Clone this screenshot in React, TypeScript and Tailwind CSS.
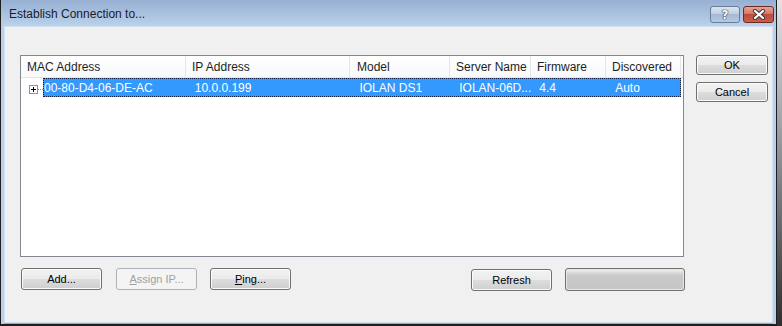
const btn =
  "flex items-center justify-center rounded-[3px] border border-[#707070] bg-[linear-gradient(to_bottom,#f2f2f2_0%,#ebebeb_50%,#dddddd_50%,#cfcfcf_100%)] shadow-[inset_0_0_0_1px_#fbfbfb] text-[11px] text-black";

const disabledBtn =
  "flex items-center justify-center rounded-[3px] border border-[#adb2b5] bg-[#f4f4f4] text-[11px] text-[#a0a0a0]";

const columns = [
  { label: "MAC Address", width: "w-[165px]", pad: "pl-[6px]" },
  { label: "IP Address", width: "w-[164px]", pad: "pl-[6px]" },
  { label: "Model", width: "w-[100px]", pad: "pl-[7px]" },
  { label: "Server Name", width: "w-[81px]", pad: "pl-[6px]" },
  { label: "Firmware", width: "w-[75px]", pad: "pl-[6px]" },
  { label: "Discovered", width: "w-[75px]", pad: "pl-[6px]" },
];

function TitleBar() {
  return (
    <div className="flex h-[26px] bg-[linear-gradient(to_bottom,#97b0d2,#b9d1ea)] pl-[8px] pr-[2px]">
      <div className="flex-1 pt-[7px] text-[12px] leading-[14px] text-[#1b1b2b]">
        Establish Connection to...
      </div>
      <div className="mt-[6px] flex h-[17px] gap-[3px]">
        <div className="flex w-[30px] items-center justify-center rounded-[3px] border border-[#6a7c97] bg-[linear-gradient(to_bottom,#dbe5f1_0%,#bccde2_50%,#a3b9d6_50%,#b4cbe5_100%)]">
          <span className="font-['DejaVu_Sans',sans-serif] text-[12px] font-bold leading-none text-white [text-shadow:0_0_1px_#2a2a2a,0_0_1px_#2a2a2a,0_0_1px_#2a2a2a]">
            ?
          </span>
        </div>
        <div className="flex w-[31px] items-center justify-center rounded-[3px] border border-[#6b2c28] bg-[linear-gradient(to_bottom,#e6a496_0%,#d47868_45%,#c04a38_50%,#c9604c_100%)]">
          <svg width="16" height="11" viewBox="0 0 16 11">
            <path d="M4 2 L12 9 M12 2 L4 9" stroke="#3b3b3b" strokeWidth="4.2" strokeLinecap="round" />
            <path d="M4 2 L12 9 M12 2 L4 9" stroke="#ffffff" strokeWidth="2.2" strokeLinecap="round" />
          </svg>
        </div>
      </div>
    </div>
  );
}

function DeviceList() {
  return (
    <div className="h-[202px] w-[664px] border border-[#828790] bg-white text-[12px]">
      <div className="flex h-[22px] border-b border-[#e5e5e5] bg-[linear-gradient(to_bottom,#ffffff,#f7f8fa)]">
        {columns.map((col) => (
          <div
            key={col.label}
            className={`${col.width} ${col.pad} flex items-center border-r border-[#e5e5e5] pt-[1px] text-[#1e1e1e]`}
          >
            {col.label}
          </div>
        ))}
      </div>
      <div className="flex h-[19px]">
        <div className="flex w-[22px] items-start">
          <div className="ml-[8px] mt-[7px] flex h-[9px] w-[9px] items-center justify-center border border-[#919191] bg-white">
            <svg width="7" height="7" viewBox="0 0 7 7">
              <path d="M1 3.5 H6 M3.5 1 V6" stroke="#000" strokeWidth="1" />
            </svg>
          </div>
          <div className="mt-[11px] w-[5px] border-t border-dotted border-[#8a8a8a]" />
        </div>
        <div className="flex w-[638px] items-center border border-dotted border-[#10204a] bg-[#3399ff] text-white">
          <div className="w-[142px]">00-80-D4-06-DE-AC</div>
          <div className="w-[164px] pl-[9px]">10.0.0.199</div>
          <div className="w-[100px] pl-[10px]">IOLAN DS1</div>
          <div className="w-[81px] pl-[10px] whitespace-nowrap">IOLAN-06D...</div>
          <div className="w-[75px] pl-[9px]">4.4</div>
          <div className="w-[75px] pl-[10px]">Auto</div>
        </div>
      </div>
    </div>
  );
}

export default function App() {
  return (
    <div className="flex h-[326px] w-[782px] bg-[linear-gradient(to_bottom,#dfe3e8,#9aa0a8_40%,#2e2e2e)] font-['Liberation_Sans',Arial,sans-serif]">
      <div className="h-[326px] w-[777px] bg-[#1e1e1e] pl-[1px] pr-[1px] pb-[2px]">
        <div className="flex h-full flex-col bg-[#b9d1ea]">
          <TitleBar />
          <div className="mx-[3px] flex-1 border border-[#d2e2f3] bg-[#f0f0f0] pl-[15px] pt-[28px]">
            <div className="flex">
              <DeviceList />
              <div className="ml-[12px] flex flex-col">
                <button className={`${btn} h-[20px] w-[72px] border-[#3c8fc4] shadow-[inset_0_0_0_1px_#8fdcf8]`}>
                  OK
                </button>
                <button className={`${btn} mt-[7px] h-[20px] w-[72px]`}>Cancel</button>
              </div>
            </div>
            <div className="mt-[11px] flex items-start">
              <button className={`${btn} ml-[1px] h-[22px] w-[81px]`}>Add...</button>
              <button className={`${disabledBtn} ml-[14px] h-[22px] w-[81px]`}>
                <span>
                  <span className="underline">A</span>ssign IP...
                </span>
              </button>
              <button className={`${btn} ml-[13px] h-[22px] w-[81px]`}>
                <span>
                  <span className="underline">P</span>ing...
                </span>
              </button>
              <button className={`${btn} ml-[180px] mt-[1px] h-[22px] w-[81px]`}>Refresh</button>
              <div className="ml-[13px] h-[23px] w-[120px] rounded-[3px] border border-[#707070] bg-[linear-gradient(to_bottom,#f4f4f4_0%,#dadada_18%,#c9c9c9_30%,#c6c6c6_100%)] shadow-[inset_0_0_0_1px_#e6e6e6]" />
            </div>
          </div>
          <div className="mx-[3px] h-[1px] bg-[#5cc3ec]" />
        </div>
      </div>
    </div>
  );
}
